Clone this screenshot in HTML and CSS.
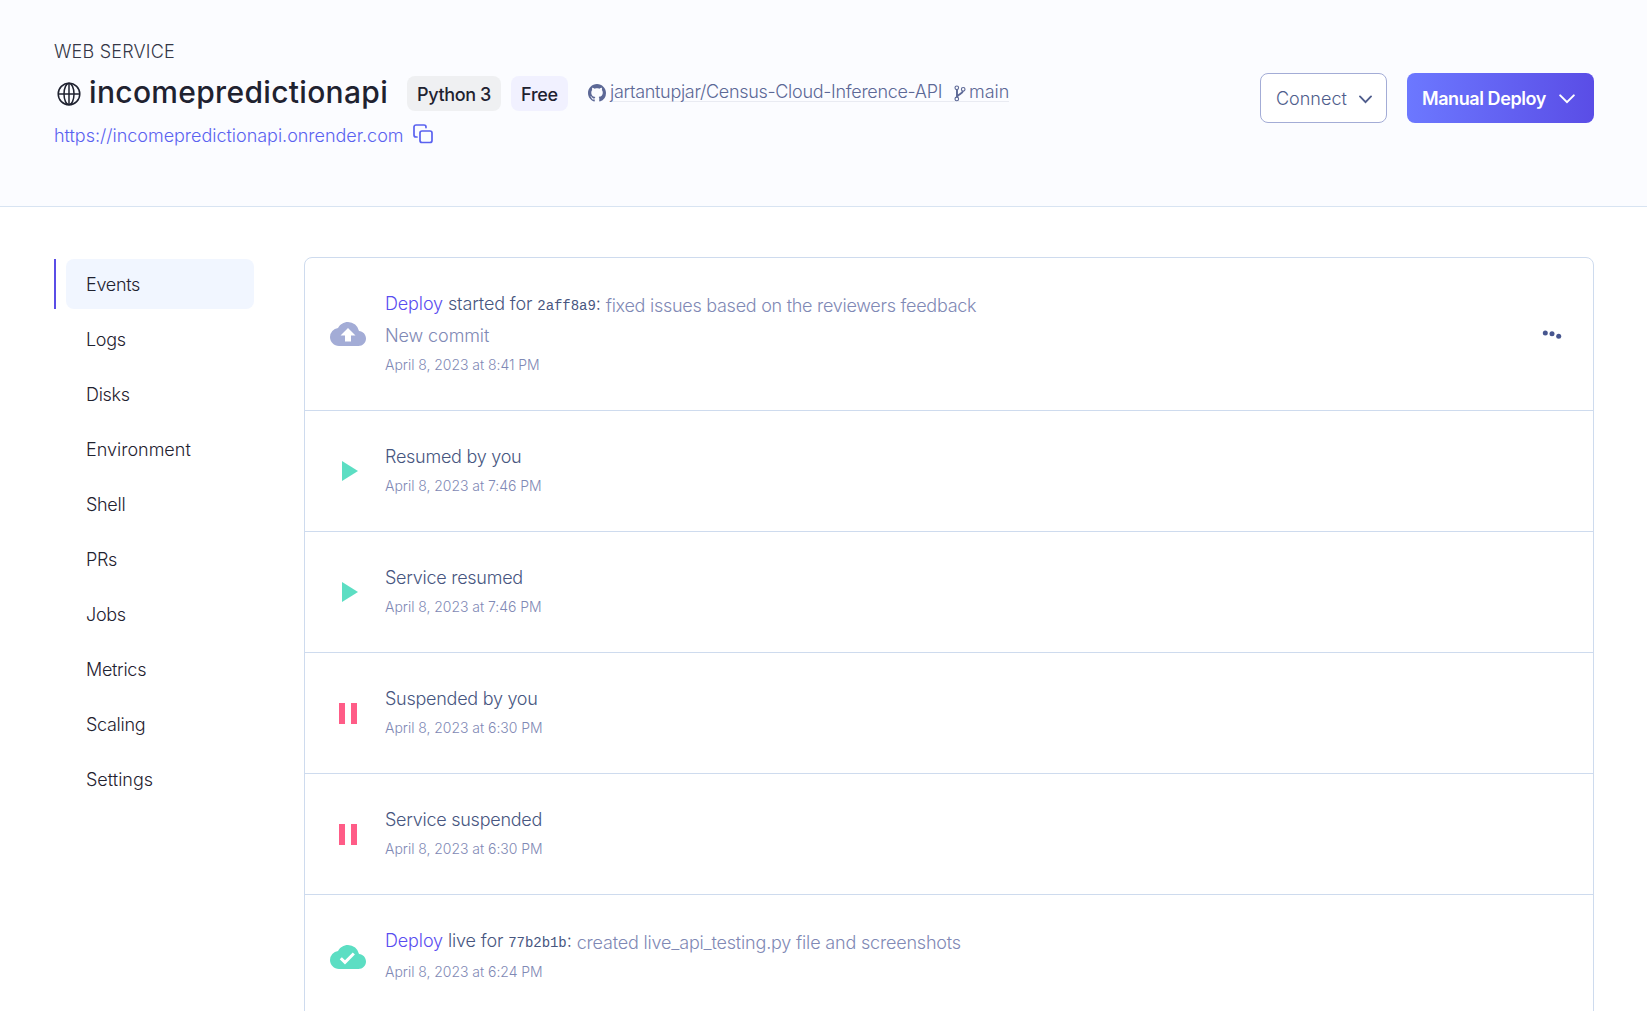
FILE: index.html
```html
<!DOCTYPE html>
<html lang="en">
<head>
<meta charset="utf-8">
<title>incomepredictionapi · Web Service</title>
<link rel="stylesheet" href="styles.css">
</head>
<body>
<header class="header">
  <div class="service">
    <div class="service-type">WEB SERVICE</div>
    <div class="service-row">
      <svg class="globe" viewBox="0 0 24 24" fill="none" stroke="currentColor" stroke-width="1.5"><circle cx="12" cy="12" r="10.8"/><ellipse cx="12" cy="12" rx="5" ry="10.8"/><path d="M1.2 12h21.6M12 1.2v21.6"/></svg>
      <h1 class="service-name">incomepredictionapi</h1>
      <span class="badge badge-runtime">Python 3</span>
      <span class="badge badge-plan">Free</span>
      <div class="repo">
        <svg class="github" viewBox="0 0 16 16" fill="currentColor"><path d="M8 0C3.58 0 0 3.58 0 8c0 3.54 2.29 6.53 5.47 7.59.4.07.55-.17.55-.38 0-.19-.01-.82-.01-1.49-2.01.37-2.53-.49-2.69-.94-.09-.23-.48-.94-.82-1.13-.28-.15-.68-.52-.01-.53.63-.01 1.08.58 1.23.82.72 1.21 1.87.87 2.33.66.07-.52.28-.87.51-1.07-1.78-.2-3.64-.89-3.64-3.95 0-.87.31-1.59.82-2.15-.08-.2-.36-1.02.08-2.12 0 0 .67-.21 2.2.82.64-.18 1.32-.27 2-.27s1.36.09 2 .27c1.53-1.04 2.2-.82 2.2-.82.44 1.1.16 1.92.08 2.12.51.56.82 1.27.82 2.15 0 3.07-1.87 3.75-3.65 3.95.29.25.54.73.54 1.48 0 1.07-.01 1.93-.01 2.2 0 .21.15.46.55.38A8.01 8.01 0 0 0 16 8c0-4.42-3.58-8-8-8z"/></svg>
        <a class="repo-link"><span class="repo-name">jartantupjar/Census-Cloud-Inference-API</span><svg class="branch" viewBox="0 0 12 18" fill="none" stroke="currentColor" stroke-width="1.2"><circle cx="2.6" cy="3" r="1.9"/><circle cx="9.4" cy="4.6" r="1.9"/><circle cx="2.6" cy="14.8" r="1.9"/><path stroke-width="2" d="M2.8 5v8M9 6.6C8.6 10 4 9.200 3 12.300"/></svg><span>main</span></a>
      </div>
    </div>
    <div class="url-row">
      <a class="url">https://incomepredictionapi.onrender.com</a>
      <svg class="copy" viewBox="0 0 20 20" fill="none" stroke="currentColor" stroke-width="1.7" stroke-linecap="round" stroke-linejoin="round"><rect x="7" y="7" width="12" height="11.500" rx="2"/><path d="M4 13H3a2 2 0 0 1-2-2V3a2 2 0 0 1 2-2h8a2 2 0 0 1 2 2v.6"/></svg>
    </div>
  </div>
  <div class="actions">
    <button class="btn btn-connect"><span>Connect</span><svg class="chev" viewBox="0 0 12 8" fill="none" stroke="currentColor" stroke-width="1.700" stroke-linecap="round"><path d="M.9 1.200 6 6.500 11.100 1.200"/></svg></button>
    <button class="btn btn-deploy"><span>Manual Deploy</span><svg class="chev chev-lg" viewBox="0 0 16 10" fill="none" stroke="currentColor" stroke-width="2" stroke-linecap="round"><path d="M1.200 1.400 8 8.200 14.800 1.400"/></svg></button>
  </div>
</header>
<main class="content">
  <nav class="sidebar">
    <a class="nav-item active"><span class="nav-label">Events</span></a>
    <a class="nav-item"><span class="nav-label">Logs</span></a>
    <a class="nav-item"><span class="nav-label">Disks</span></a>
    <a class="nav-item"><span class="nav-label wide">Environment</span></a>
    <a class="nav-item"><span class="nav-label">Shell</span></a>
    <a class="nav-item"><span class="nav-label">PRs</span></a>
    <a class="nav-item"><span class="nav-label">Jobs</span></a>
    <a class="nav-item"><span class="nav-label">Metrics</span></a>
    <a class="nav-item"><span class="nav-label">Scaling</span></a>
    <a class="nav-item"><span class="nav-label wide">Settings</span></a>
  </nav>
  <section class="events">
    <article class="event event-tall">
      <div class="event-icon"><svg class="cloud muted" viewBox="0 0 24 16"><path fill="currentColor" d="M19.350 6.040A7.490 7.490 0 0 0 12 0C9.110 0 6.600 1.640 5.350 4.040A5.994 5.994 0 0 0 0 10c0 3.310 2.690 6 6 6h13c2.760 0 5-2.240 5-5 0-2.640-2.050-4.780-4.650-4.960zM14 9v4h-4V9H7l5-5 5 5h-3z"/></svg></div>
      <div class="event-body">
        <div class="event-title"><span><a class="link">Deploy</a> started for <code>2aff8a9</code>:</span><span class="message">fixed issues based on the reviewers feedback</span></div>
        <div class="reason">New commit</div>
        <time class="time">April 8, 2023 at 8:41 PM</time>
      </div>
      <svg class="more" viewBox="0 0 20 10" fill="currentColor"><circle cx="3.300" cy="3" r="2.500"/><circle cx="10" cy="3.800" r="2.500"/><circle cx="16.700" cy="6.300" r="2.500"/></svg>
    </article>
    <article class="event">
      <div class="event-icon"><svg class="play" viewBox="0 0 16 20"><path fill="currentColor" d="M0 0v20l16-10z"/></svg></div>
      <div class="event-body"><div class="event-title short">Resumed by you</div><time class="time">April 8, 2023 at 7:46 PM</time></div>
    </article>
    <article class="event">
      <div class="event-icon"><svg class="play" viewBox="0 0 16 20"><path fill="currentColor" d="M0 0v20l16-10z"/></svg></div>
      <div class="event-body"><div class="event-title short">Service resumed</div><time class="time">April 8, 2023 at 7:46 PM</time></div>
    </article>
    <article class="event">
      <div class="event-icon"><svg class="pause" viewBox="0 0 18 21"><path fill="currentColor" d="M0 0h6v21H0zM12 0h6v21h-6z"/></svg></div>
      <div class="event-body"><div class="event-title short">Suspended by you</div><time class="time">April 8, 2023 at 6:30 PM</time></div>
    </article>
    <article class="event">
      <div class="event-icon"><svg class="pause" viewBox="0 0 18 21"><path fill="currentColor" d="M0 0h6v21H0zM12 0h6v21h-6z"/></svg></div>
      <div class="event-body"><div class="event-title short">Service suspended</div><time class="time">April 8, 2023 at 6:30 PM</time></div>
    </article>
    <article class="event event-live">
      <div class="event-icon"><svg class="cloud ok" viewBox="0 0 24 16"><path fill="currentColor" d="M19.350 6.040A7.490 7.490 0 0 0 12 0C9.110 0 6.600 1.640 5.350 4.040A5.994 5.994 0 0 0 0 10c0 3.310 2.690 6 6 6h13c2.760 0 5-2.240 5-5 0-2.640-2.050-4.780-4.650-4.960zM10 13l-3.500-3.500 1.410-1.410L10 10.170 15.180 5l1.410 1.410L10 13z"/></svg></div>
      <div class="event-body">
        <div class="event-title"><span><a class="link">Deploy</a> live for <code>77b2b1b</code>:</span><span class="message live-message">created live_api_testing.py file and screenshots</span></div>
        <time class="time">April 8, 2023 at 6:24 PM</time>
      </div>
    </article>
  </section>
</main>
</body>
</html>
```
FILE: styles.css
```css
* { box-sizing: border-box; }
body {
  margin: 0;
  height: 1011px;
  overflow: hidden;
  background: #fff;
  color: #1f2230;
  font: 300 18px/30px Inter, sans-serif;
  display: flex;
  flex-direction: column;
}
svg { display: block; flex: none; }
.header {
  flex: none;
  height: 207px;
  padding: 37px 53px 0 54px;
  background: #fbfcff;
  border-bottom: 1px solid #d8e4f2;
  display: flex;
  justify-content: space-between;
  align-items: flex-start;
}
.service-type { letter-spacing: .2px; color: #343746; }
.service-row { display: flex; align-items: center; height: 52px; }
.globe { width: 24px; height: 24px; margin: 2px 8px 0 3px; color: #1f2230; }
.service-name {
  margin: 0;
  width: 318px;
  padding-bottom: 3px;
  font-size: 30px;
  font-weight: 500;
  line-height: 48px;
  letter-spacing: .32px;
}
.badge {
  height: 35px;
  margin-top: 1px;
  border-radius: 8px;
  font-weight: 500;
  line-height: 37px;
  text-align: center;
}
.badge-runtime { width: 94px; background: #eff0f2; letter-spacing: -.38px; }
.badge-plan { width: 57px; margin-left: 10px; background: #f1f1ff; letter-spacing: -.25px; }
.repo { display: flex; align-items: center; margin-left: 20px; color: #5c6896; }
.github { width: 18px; height: 18px; }
.repo-link {
  display: flex;
  height: 18px;
  margin-left: 4px;
  line-height: 16px;
  border-bottom: 1px solid #e9ebf2;
}
.repo-name { width: 344px; letter-spacing: -.3px; }
.branch { width: 12px; height: 17px; margin: 1px 3px 0 0; }
.url-row { display: flex; align-items: center; gap: 9px; height: 34px; color: #5a62f0; }
.url { width: 350px; white-space: nowrap; letter-spacing: -.02px; }
.copy { width: 20px; height: 20px; margin-top: -4px; }
.actions { display: flex; gap: 20px; padding-top: 36px; }
.btn {
  height: 50px;
  padding: 2px 15px 0;
  border-radius: 8px;
  font: 300 18px/46px Inter, sans-serif;
  display: flex;
  align-items: center;
}
.btn-connect { width: 127px; border: 1px solid #a3acd6; background: #fff; color: #4f5d8c; gap: 12px; }
.btn-deploy {
  width: 187px;
  border: 0;
  color: #fff;
  font-weight: 600;
  letter-spacing: -.42px;
  gap: 13px;
  background: linear-gradient(90deg, #6c78ff, #5a4de6);
}
.chev { width: 13px; height: 9px; }
.chev-lg { width: 16px; height: 10px; }
.content { display: flex; gap: 50px; padding: 50px 53px 0 54px; }
.sidebar { width: 200px; padding-top: 2px; display: flex; flex-direction: column; gap: 5px; }
.nav-item { display: flex; height: 50px; padding-left: 10px; border-left: 2px solid transparent; }
.nav-label { flex: 1; padding-left: 20px; border-radius: 8px; line-height: 51px; letter-spacing: -.3px; }
.nav-label.wide { letter-spacing: 0; }
.active { border-color: #5a4de6; }
.active .nav-label { background: #f1f6ff; }
.events { flex: 1; border: 1px solid #cedbee; border-radius: 8px; height: 900px; }
.event { display: flex; height: 121px; border-bottom: 1px solid #cedbee; }
.event-tall { height: 153px; }
.event-live { height: 124px; }
.event-icon { width: 80px; padding-left: 25px; display: flex; align-items: center; }
.event-body { flex: 1; padding-top: 31px; }
.event-title { display: flex; color: #47567f; line-height: 30px; letter-spacing: -.13px; }
.short { letter-spacing: -.26px; }
.link { color: #5a4df0; }
code { font: 400 14px "Liberation Mono", monospace; letter-spacing: -.05px; }
.message { margin: 2px 0 0 5px; color: #7f89b5; letter-spacing: -.27px; line-height: 30px; }
.live-message { letter-spacing: -.18px; }
.reason { color: #7f89b5; line-height: 30px; letter-spacing: -.1px; }
.time { display: block; font-size: 14px; line-height: 28px; color: #7f89b5; letter-spacing: -.04px; }
.cloud { width: 36px; height: 24px; }
.muted { color: #a3acd6; }
.ok, .play { color: #5cdec3; }
.play { width: 16px; height: 20px; margin-left: 12px; }
.pause { width: 18px; height: 21px; margin-left: 9px; color: #ff5c87; }
.more { width: 20px; height: 10px; margin: 72px 31px 0 0; color: #47568f; }
```
